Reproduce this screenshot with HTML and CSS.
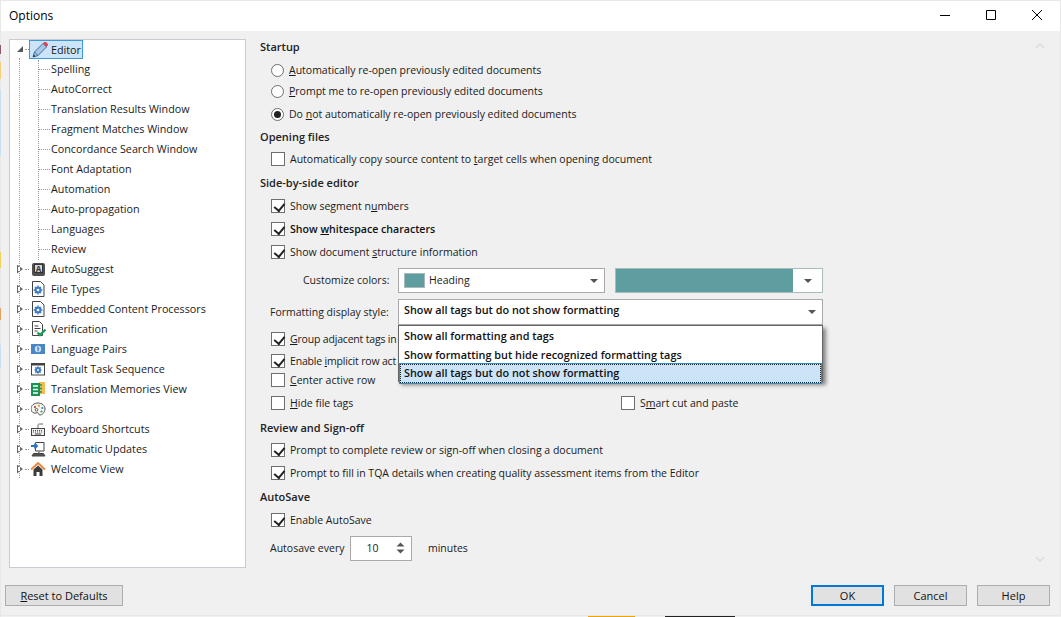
FILE: index.html
```html
<!DOCTYPE html>
<html lang="en">
<head>
<meta charset="utf-8">
<title>Options</title>
<link rel="stylesheet" href="styles.css">
</head>
<body>
<svg class="defs" width="0" height="0">
  <defs>
    <symbol id="gear" viewBox="0 0 16 16">
      <path d="M1.500 .5h8l3.500 3.500v11.500h-11.500z" fill="#fff" stroke="#444"/>
      <circle cx="7" cy="9" r="3.500" fill="#3f7cc4"/>
      <path d="M7 4.600v8.800M2.600 9h8.800M3.900 5.900l6.200 6.200M10.100 5.900l-6.200 6.200" stroke="#3f7cc4" stroke-width="1.300"/>
      <circle cx="7" cy="9" r="1.300" fill="#fff"/>
    </symbol>
  </defs>
</svg>
<div class="window">
  <header class="titlebar">
    <span class="title">Options</span>
    <div class="caption">
      <svg class="cap" width="46" height="30" viewBox="0 0 46 30"><path d="M18 14.500h10" stroke="#000"/></svg>
      <svg class="cap" width="46" height="30" viewBox="0 0 46 30"><path d="M18.500 9.500h9v9h-9z" fill="none" stroke="#000"/></svg>
      <svg class="cap" width="46" height="30" viewBox="0 0 46 30"><path d="M18 9l10 10M28 9l-10 10" stroke="#000" fill="none"/></svg>
    </div>
  </header>
  <div class="body">
    <nav class="tree">
      <div class="vline vline-root"></div>
      <div class="vline vline-sub"></div>
      <div class="node root first">
        <span class="exp open"></span><span class="dash"></span>
        <span class="sel">
          <svg class="ico" width="18" height="18" viewBox="0 0 18 18"><path d="M2 16l1.500-5L12 2.500l3.500 3.500L7 14.500z" fill="#a9c8e8" stroke="#3a6ea8"/><path d="M3.500 11l3.500 3.500" stroke="#3a6ea8"/><path d="M2 16l.8-2.600 1.800 1.800z" fill="#333"/><path d="M12 2.500l1.200-1.200c.6-.5 1.300-.5 1.900 0l1.500 1.500c.5.600.5 1.300 0 1.900L15.500 6z" fill="#d8434e"/></svg>
          <span>Editor</span>
        </span>
      </div>
      <div class="node child"><span class="hdash"></span>Spelling</div>
      <div class="node child"><span class="hdash"></span>AutoCorrect</div>
      <div class="node child"><span class="hdash"></span>Translation Results Window</div>
      <div class="node child"><span class="hdash"></span>Fragment Matches Window</div>
      <div class="node child"><span class="hdash"></span>Concordance Search Window</div>
      <div class="node child"><span class="hdash"></span>Font Adaptation</div>
      <div class="node child"><span class="hdash"></span>Automation</div>
      <div class="node child"><span class="hdash"></span>Auto-propagation</div>
      <div class="node child"><span class="hdash"></span>Languages</div>
      <div class="node child"><span class="hdash"></span>Review</div>
      <div class="node root"><span class="exp"></span><span class="dash"></span>
        <svg class="ico" width="16" height="16" viewBox="0 0 16 16"><rect x="1" y="2" width="13" height="13" rx="2" fill="#4f4f4f"/><rect x="3.500" y="3.500" width="8" height="8" fill="#d8d8d8" stroke="#333"/><text class="ico-letter" x="7.500" y="10.500">A</text></svg>AutoSuggest</div>
      <div class="node root"><span class="exp"></span><span class="dash"></span><svg class="ico" width="16" height="16"><use href="#gear"/></svg>File Types</div>
      <div class="node root"><span class="exp"></span><span class="dash"></span><svg class="ico" width="16" height="16"><use href="#gear"/></svg>Embedded Content Processors</div>
      <div class="node root"><span class="exp"></span><span class="dash"></span>
        <svg class="ico" width="16" height="16" viewBox="0 0 16 16"><path d="M1.500.5h7l3 3v11h-10z" fill="#fff" stroke="#444"/><path d="M3.500 5h4M3.500 7.500h6M3.500 10h3" stroke="#444"/><path d="M6.500 11.500l2.500 2.600L14.500 8.500" fill="none" stroke="#1e9c5c" stroke-width="2.400"/></svg>Verification</div>
      <div class="node root"><span class="exp"></span><span class="dash"></span>
        <svg class="ico" width="16" height="16" viewBox="0 0 16 16"><rect x="0" y="3" width="14" height="10" fill="#4a85c6"/><circle cx="7" cy="8" r="3.200" fill="#cfe0f3"/><path d="M7 5.500v5M6 6.500l2 1-1 2" stroke="#4a85c6" fill="none"/></svg>Language Pairs</div>
      <div class="node root"><span class="exp"></span><span class="dash"></span>
        <svg class="ico" width="16" height="16" viewBox="0 0 16 16"><rect x=".5" y="2.500" width="13" height="11.500" fill="#fff" stroke="#444"/><rect x="0" y="2" width="14" height="2.500" fill="#444"/><circle cx="7" cy="9" r="3" fill="#3f7cc4"/><path d="M7 5.300v7.400M3.300 9h7.400M4.400 6.400l5.200 5.200M9.600 6.400l-5.200 5.200" stroke="#3f7cc4" stroke-width="1.200"/><circle cx="7" cy="9" r="1" fill="#fff"/></svg>Default Task Sequence</div>
      <div class="node root"><span class="exp"></span><span class="dash"></span>
        <svg class="ico" width="16" height="16" viewBox="0 0 16 16"><rect x="8" y="1" width="6" height="12" fill="#f1bd4e"/><rect x="0" y="2" width="9" height="13" fill="#169257"/><path d="M2 5h5M2 8.500h5M2 12h5" stroke="#fff" stroke-width="1.500"/><path d="M9 4h2M9 7.500h2M9 11h2" stroke="#169257" stroke-width="1.400"/></svg>Translation Memories View</div>
      <div class="node root"><span class="exp"></span><span class="dash"></span>
        <svg class="ico" width="16" height="16" viewBox="0 0 16 16"><path d="M7 2c4 0 7 2.500 7 6s-3 6-5 6c-1.500 0-1-1.500-2-2.200-1.200-.7-2.500.9-4 .2C.5 11 0 9.500 0 8c0-3.500 3-6 7-6z" fill="#f7f5f0" stroke="#555"/><circle cx="4" cy="6" r="1.100" fill="#b23a3a"/><circle cx="8" cy="4.800" r="1.100" fill="#d9a21f"/><circle cx="11.300" cy="7" r="1.100" fill="#3f7cc4"/><circle cx="10.500" cy="10.500" r="1.100" fill="#3a9a5a"/><circle cx="5.500" cy="8.800" r="1.300" fill="#fff" stroke="#555"/></svg>Colors</div>
      <div class="node root"><span class="exp"></span><span class="dash"></span>
        <svg class="ico" width="16" height="16" viewBox="0 0 16 16"><path d="M7 7V4c0-1 1-1 2-1h3" fill="none" stroke="#666"/><rect x=".5" y="7.500" width="13" height="7" fill="#eee" stroke="#444"/><path d="M2 9.500h10M2 11h10" stroke="#555" stroke-dasharray="1 1"/><path d="M4 13h6" stroke="#444"/></svg>Keyboard Shortcuts</div>
      <div class="node root"><span class="exp"></span><span class="dash"></span>
        <svg class="ico" width="16" height="16" viewBox="0 0 16 16"><path d="M4.500 1.500h8.500v8.500h-8.500z" fill="#fff" stroke="#444"/><path d="M8 10.500v2M1 15h13l-1.500-2.500h-10z" fill="#555" stroke="#444"/><path d="M0 5h5.500M3.500 2.500L6 5l-2.500 2.500" fill="none" stroke="#2d73bd" stroke-width="1.800"/></svg>Automatic Updates</div>
      <div class="node root"><span class="exp"></span><span class="dash"></span>
        <svg class="ico" width="16" height="16" viewBox="0 0 16 16"><path d="M0 8.500L7 2l7 6.500" fill="none" stroke="#e8853a" stroke-width="2"/><path d="M2.500 8.500L7 4.500l4.500 4V15h-3v-4h-3v4h-3z" fill="#3b3b3b"/></svg>Welcome View</div>
    </nav>

    <main class="panel">
      <svg class="scroll scroll-up" width="10" height="6" viewBox="0 0 10 6"><path d="M1 5l4-4 4 4" fill="none" stroke="#d8d8d8" stroke-width="1.300"/></svg>
      <svg class="scroll scroll-down" width="10" height="6" viewBox="0 0 10 6"><path d="M1 1l4 4 4-4" fill="none" stroke="#d8d8d8" stroke-width="1.300"/></svg>

      <h2 class="row head">Startup</h2>
      <label class="row opt radio-row"><span class="radio"></span><span><u>A</u>utomatically re-open previously edited documents</span></label>
      <label class="row opt radio-row"><span class="radio"></span><span><u>P</u>rompt me to re-open previously edited documents</span></label>
      <label class="row opt radio-row"><span class="radio on"></span><span>Do <u>n</u>ot automatically re-open previously edited documents</span></label>

      <h2 class="row head">Opening files</h2>
      <label class="row opt"><span class="box"></span><span>Automatically copy source content to <u>t</u>arget cells when opening document</span></label>

      <h2 class="row head">Side-by-side editor</h2>
      <label class="row opt"><span class="box on"></span><span>Show segment n<u>u</u>mbers</span></label>
      <label class="row opt"><span class="box on"></span><strong class="strong">Show <u>w</u>hitespace characters</strong></label>
      <label class="row opt"><span class="box on"></span><span>Show document <u>s</u>tructure information</span></label>

      <div class="row colors">
        <span class="lbl lbl-colors">Customize colors:</span>
        <div class="combo combo-heading">
          <span class="swatch"></span><span>Heading</span><span class="arrow"></span>
        </div>
        <div class="colorpick"><span class="colorfill"></span><span class="colorbtn"><span class="arrow"></span></span></div>
      </div>

      <div class="row format">
        <span class="lbl lbl-format">Formatting display style:</span>
        <div class="combo combo-format"><strong class="strong-wide">Show all tags but do not show formatting</strong><span class="arrow"></span></div>
      </div>

      <label class="row opt"><span class="box on"></span><span class="tight"><u>G</u>roup adjacent tags in</span></label>
      <label class="row opt"><span class="box on"></span><span class="tight">Enable <u>i</u>mplicit row act</span></label>
      <label class="row opt"><span class="box"></span><span><u>C</u>enter active row</span></label>
      <div class="row twocol">
        <label class="opt"><span class="box"></span><span><u>H</u>ide file tags</span></label>
        <label class="opt"><span class="box"></span><span>S<u>m</u>art cut and paste</span></label>
      </div>

      <h2 class="row head">Review and Sign-off</h2>
      <label class="row opt"><span class="box on"></span><span>Prompt to complete review or sign-off when closing a document</span></label>
      <label class="row opt"><span class="box on"></span><span>Prompt to fill in TQA details when creating quality assessment items from the Editor</span></label>

      <h2 class="row head">AutoSave</h2>
      <label class="row opt"><span class="box on"></span><span>Enable AutoSave</span></label>
      <div class="row autosave">
        <span>Autosave every</span>
        <div class="spin"><span class="spin-val">10</span>
          <svg width="11" height="14" viewBox="0 0 11 14"><path d="M1.500 5.500L5.500 1.500l4 4z M1.500 8.500h8l-4 4z" fill="#555"/></svg>
        </div>
        <span>minutes</span>
      </div>

      <ul class="dropdown">
        <li>Show all formatting and tags</li>
        <li>Show formatting but hide recognized formatting tags</li>
        <li class="current">Show all tags but do not show formatting</li>
      </ul>
    </main>
  </div>
  <footer class="footer">
    <button class="btn btn-reset"><u>R</u>eset to Defaults</button>
    <div class="actions">
      <button class="btn btn-ok">OK</button>
      <button class="btn">Cancel</button>
      <button class="btn">Help</button>
    </div>
  </footer>
</div>
</body>
</html>
```
FILE: styles.css
```css
* { box-sizing: border-box; }
html, body { margin: 0; height: 100%; overflow: hidden; }
body {
  width: 1061px;
  height: 617px;
  background-color: #e8e8e8;
  background-image:
    linear-gradient(to bottom,
      #e8e8e8 45px, #8a5a6a 45px, #8a5a6a 54px, #e8e8e8 54px,
      #e8e8e8 62px, #f5cf7a 62px, #f5cf7a 79px, #e8e8e8 79px,
      #e8e8e8 90px, #c9e0f0 90px, #c9e0f0 155px, #e8e8e8 155px,
      #e8e8e8 252px, #f0cf5a 252px, #f0cf5a 268px, #e8e8e8 268px,
      #e8e8e8 308px, #e8a060 308px, #e8a060 320px, #e8e8e8 320px,
      #e8e8e8 345px, #c9e0f0 345px, #c9e0f0 368px, #e8e8e8 368px),
    linear-gradient(to right,
      #f0f0f0 588px, #f0a400 588px, #f0a400 635px, #f0f0f0 635px,
      #f0f0f0 665px, #222 665px, #222 735px, #f0f0f0 735px);
  background-size: 1px 100%, 100% 1px;
  background-position: 0 0, 0 100%;
  background-repeat: no-repeat;
  font: 10.5px/16px "Open Sans", "Noto Sans", sans-serif;
  color: #1a1a1a;
  padding: 1px 1px 2px 1px;
}
.defs { position: absolute; }
.window {
  height: 614px;
  display: flex;
  flex-direction: column;
  background: #f0f0f0;
}
.titlebar {
  height: 30px;
  flex: none;
  background: #fff;
  display: flex;
  align-items: center;
  justify-content: space-between;
  padding-left: 8px;
}
.title { font-size: 12px; color: #000; }
.caption { display: flex; }
.cap { display: block; }
.body {
  flex: 1;
  display: flex;
  padding: 8px 0 0 8px;
  min-height: 0;
}
.tree {
  width: 237px;
  height: 529px;
  flex: none;
  background: #fff;
  border: 1px solid #c6ccd2;
  position: relative;
  font-size: 10.75px;
}
.vline { position: absolute; border-left: 1px dotted #9a9a9a; }
.vline-root { left: 9px; top: 18px; height: 420px; }
.vline-sub { left: 28px; top: 20px; height: 200px; }
.node {
  height: 20px;
  display: flex;
  align-items: center;
  white-space: nowrap;
  position: relative;
}
.node.first { margin-top: -1px; }
.node.root { padding-left: 7px; }
.node.child { padding-left: 28px; }
.hdash { width: 12px; margin-right: 1px; border-top: 1px dotted #9a9a9a; flex: none; }
.exp {
  width: 6px;
  height: 9px;
  flex: none;
  position: relative;
  clip-path: polygon(0 0, 100% 50%, 0 100%);
  background-color: #6a6a6a;
}
.exp::after {
  content: "";
  position: absolute;
  inset: 2.500px auto 2.500px 1px;
  width: 2px;
  background: #fff;
}
.exp.open {
  width: 6px;
  height: 6px;
  clip-path: polygon(100% 0, 100% 100%, 0 100%);
  background-color: #595959;
}
.exp.open::after { display: none; }
.dash { width: 4px; margin: 0 2px; border-top: 1px dotted #9a9a9a; flex: none; }
.ico { flex: none; margin-right: 4px; display: block; }
.ico-letter { font: bold 8px "Open Sans", sans-serif; text-anchor: middle; fill: #333; }
.sel {
  display: flex;
  align-items: center;
  height: 19px;
  width: 54px;
  background: #cce4f7;
  border: 1px solid #3c9ad8;
  padding-left: 1px;
  margin: 1px 0 0 -2px;
}
.sel .ico { margin-right: 2px; }

.panel {
  flex: 1;
  position: relative;
  margin-left: 14px;
  margin-top: -3px;
  display: grid;
  grid-template-rows: 22px 24px 18px 28px 18px 26px 22px 24px 22px 24px 32px 32px 22px 22px 16px 30px 20px 24px 22px 26px 20px 36px;
  align-content: start;
  min-width: 0;
}
.row { display: flex; align-items: center; margin: 0; white-space: nowrap; }
.head { font: 600 11px/16px "Open Sans", "Noto Sans", sans-serif; color: #222; }
.opt { display: flex; align-items: center; padding-left: 11px; }
.tight { letter-spacing: -.18px; }
.box {
  width: 14px;
  height: 14px;
  border: 1px solid #6e6e6e;
  background: #fff;
  flex: none;
  margin-right: 5px;
  position: relative;
}
.box.on::after {
  content: "";
  position: absolute;
  left: 3.500px;
  top: 1px;
  width: 4.500px;
  height: 8px;
  border: solid #222;
  border-width: 0 2px 2px 0;
  transform: rotate(40deg);
}
.radio {
  width: 13px;
  height: 13px;
  border: 1px solid #6e6e6e;
  border-radius: 50%;
  background: #fff;
  flex: none;
  margin-right: 5px;
  position: relative;
}
.radio.on::after {
  content: "";
  position: absolute;
  inset: 2px;
  border-radius: 50%;
  background: #222;
}
.strong { font-weight: 600; font-size: 10.6px; color: #111; }
.strong-wide { font-weight: 600; font-size: 10.85px; color: #111; }
.lbl { color: #222; }
.lbl-colors { padding-left: 43px; width: 138px; flex: none; }
.lbl-format { padding-left: 10px; width: 138px; flex: none; }
.combo {
  height: 25px;
  border: 1px solid #a9a9a9;
  background: #fff;
  display: flex;
  align-items: center;
  position: relative;
  flex: none;
}
.combo-heading { width: 207px; padding-left: 5px; }
.combo-format { width: 425px; height: 26px; padding: 0 0 4px 5px; }
.arrow {
  width: 0;
  height: 0;
  border: solid transparent;
  border-width: 4px 4px 0 4px;
  border-top-color: #555;
  position: absolute;
  right: 6px;
  top: 10px;
}
.swatch {
  width: 21px;
  height: 15px;
  background: #5f9ea0;
  border: 1px solid #a9b8b8;
  margin-right: 4px;
  flex: none;
}
.colorpick {
  width: 208px;
  height: 25px;
  margin-left: 10px;
  background: #fff;
  border: 1px solid #a8bcbc;
  display: flex;
  flex: none;
}
.colorfill { flex: 1; background: #5f9ea0; }
.colorbtn { width: 29px; position: relative; background: #fff; }
.colorbtn .arrow { right: 10px; top: 10px; }
.twocol { display: grid; grid-template-columns: 350px 1fr; }
.autosave { padding-left: 10px; }
.spin {
  width: 62px;
  height: 25px;
  margin: 0 15.5px 0 6px;
  border: 1px solid #a9a9a9;
  background: #fff;
  display: flex;
  align-items: center;
  justify-content: space-between;
  padding: 0 5px 0 15px;
}
.spin svg { display: block; }
.dropdown {
  position: absolute;
  left: 138px;
  top: 289px;
  width: 425px;
  height: 57px;
  margin: 0;
  padding: 1px;
  list-style: none;
  background: #fff;
  border: 1px solid #666;
  box-shadow: 3px 3px 4px rgba(0,0,0,.45);
  font-weight: 600;
  font-size: 10.85px;
  color: #111;
}
.dropdown li { height: 18.500px; padding-left: 4px; display: flex; align-items: center; }
.dropdown .current {
  background: #cce4f7;
  outline: 1px solid #2f8fcb;
  border: 1px dotted #222;
  padding-left: 3px;
}
.scroll { position: absolute; right: 15px; }
.scroll-up { top: 7px; }
.scroll-down { top: 520px; }
.footer {
  height: 47px;
  flex: none;
  display: flex;
  justify-content: space-between;
  align-items: flex-start;
  padding: 17px 10px 0 4px;
}
.actions { display: flex; gap: 10px; }
.btn {
  width: 73px;
  height: 21px;
  border: 1px solid #adadad;
  background: #e1e1e1;
  font: 11px/16px "Open Sans", "Noto Sans", sans-serif;
  color: #111;
  padding: 0;
}
.btn-reset { width: 118px; }
.btn-ok { border: 2px solid #0078d7; }
```
